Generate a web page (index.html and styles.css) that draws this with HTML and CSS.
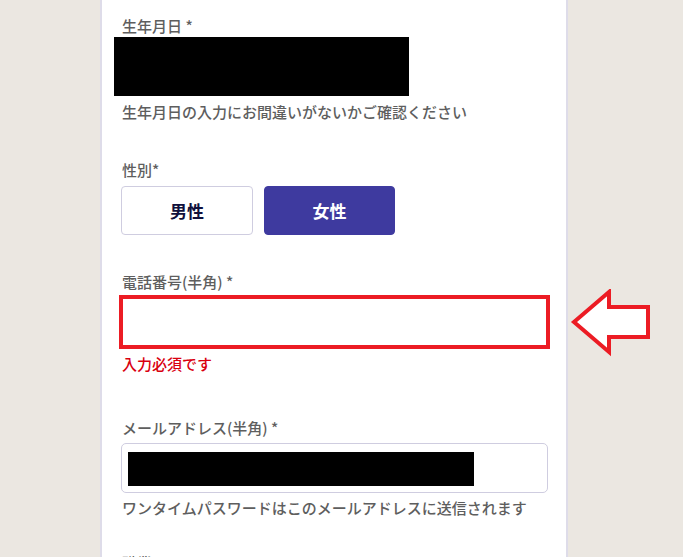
FILE: index.html
```html
<!DOCTYPE html>
<html lang="ja">
<head>
<meta charset="utf-8">
<title>会員登録</title>
<link rel="stylesheet" href="styles.css">
</head>
<body>
<div class="page">
  <div class="card">
    <div class="field first">
      <div class="label">生年月日 *</div>
      <div class="redact-date"></div>
      <div class="help">生年月日の入力にお間違いがないかご確認ください</div>
    </div>
    <div class="field f-gender">
      <div class="label">性別*</div>
      <div class="choices">
        <button class="choice">男性</button>
        <button class="choice active">女性</button>
      </div>
    </div>
    <div class="field f-phone">
      <div class="label">電話番号(半角) *</div>
      <div class="input error"></div>
      <div class="err">入力必須です</div>
    </div>
    <div class="field f-mail">
      <div class="label">メールアドレス(半角) *</div>
      <div class="input"><div class="redact-mail"></div></div>
      <div class="help">ワンタイムパスワードはこのメールアドレスに送信されます</div>
    </div>
    <div class="field f-job">
      <div class="label">職業 *</div>
    </div>
  </div>
  <svg class="arrow" width="90" height="72" viewBox="0 0 90 72">
    <polygon points="6,33 41,3 41,18 80,18 80,48 41,48 41,63" fill="#fff" stroke="#ec1c24" stroke-width="4" stroke-linejoin="miter"/>
  </svg>
</div>
</body>
</html>
```
FILE: styles.css
```css
html, body {
  margin: 0;
  padding: 0;
  background: #ebe7e1;
  font-family: "Noto Sans CJK JP", "Noto Sans", sans-serif;
}
.page {
  position: relative;
  width: 683px;
  height: 557px;
  overflow: hidden;
}
.card {
  margin-left: 100px;
  width: 468px;
  height: 557px;
  background: #fff;
  border-left: 2px solid #dedce9;
  border-right: 2px solid #dedce9;
  padding: 15px 18px 0 19px;
  box-sizing: border-box;
}
.label {
  font-size: 15px;
  line-height: 22px;
  color: #5e5e5e;
  padding-left: 1px;
  font-weight: 500;
}
.help {
  font-size: 15px;
  line-height: 22px;
  color: #5e5e5e;
  padding-left: 1px;
  font-weight: 500;
}
.redact-date {
  width: 295px;
  height: 59px;
  background: #000;
  margin-left: -7px;
}
.first .help { margin-top: 5px; }
.f-gender { margin-top: 36px; }
.choices {
  display: flex;
  gap: 11px;
  margin-top: 5px;
}
.choice {
  width: 132px;
  height: 49px;
  border: 1px solid #cfcde0;
  border-radius: 4px;
  background: #fff;
  color: #10103c;
  font-family: inherit;
  font-size: 17px;
  font-weight: 700;
  padding: 0;
}
.choice.active {
  width: 131px;
  background: #3e3a9f;
  border-color: #3e3a9f;
  color: #fff;
}
.f-phone { margin-top: 36px; }
.input {
  margin-top: 4px;
  width: 427px;
  height: 50px;
  box-sizing: border-box;
  border: 1px solid #cfcde0;
  border-radius: 5px;
  background: #fff;
  padding: 8px 6px;
}
.input.error {
  border-radius: 0;
  border-color: #ec1c24;
  outline: 4px solid #ec1c24;
  outline-offset: -2px;
}
.err {
  margin-top: 6px;
  font-size: 15px;
  line-height: 22px;
  color: #d9000f;
  padding-left: 1px;
  font-weight: 500;
}
.f-mail { margin-top: 42px; }
.redact-mail {
  width: 346px;
  height: 34px;
  background: #000;
}
.f-mail .help { margin-top: 4px; }
.f-job { margin-top: 33px; }
.arrow {
  position: absolute;
  left: 568px;
  top: 289px;
}
```
